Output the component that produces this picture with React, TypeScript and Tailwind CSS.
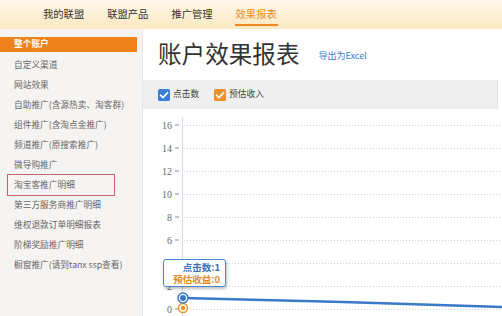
import React from "react";

const sideItems = [
  "自定义渠道",
  "网站效果",
  "自助推广(含源热卖、淘客群)",
  "组件推广(含淘点金推广)",
  "频道推广(原搜索推广)",
  "微导购推广",
  "淘宝客推广明细",
  "第三方服务商推广明细",
  "维权退款订单明细报表",
  "阶梯奖励推广明细",
  "橱窗推广(请到tanx ssp查看)",
];

const yLabels = [16, 14, 12, 10, 8, 6, 4, 2, 0];

function Check({ color }: { color: string }) {
  return (
    <svg width="12" height="12" viewBox="0 0 12 12">
      <rect x="0" y="0" width="12" height="12" rx="1.5" fill={color} />
      <path d="M2.5 6.2 L5 8.6 L9.6 3.6" stroke="#fff" strokeWidth="1.6" fill="none" strokeLinecap="round" strokeLinejoin="round" />
    </svg>
  );
}

export default function App() {
  return (
    <div
      className="w-[502px] h-[316px] overflow-hidden bg-white flex flex-col"
      style={{ fontFamily: '"Noto Sans CJK SC", "Noto Sans", sans-serif' }}
    >
      {/* top nav */}
      <div className="h-[29px] shrink-0 bg-gradient-to-b from-[#fef8e8] to-[#fbe8c2] flex items-stretch pl-[43px] gap-[23px]">
        {["我的联盟", "联盟产品", "推广管理"].map((t) => (
          <div key={t} className="flex items-center text-[10.3px] text-[#333] leading-none">
            {t}
          </div>
        ))}
        <div className="relative flex items-center text-[10.3px] text-[#f08a24] leading-none">
          效果报表
          <div className="absolute left-[-1px] right-[-1px] bottom-[3px] h-[2px] bg-[#f08a24]" />
        </div>
      </div>

      <div className="flex flex-1 min-h-0">
        {/* sidebar */}
        <div className="w-[142px] shrink-0 bg-[#f6f4f2] pt-[8px]">
          <div className="w-[137px] h-[15px] bg-[#f0821c] flex items-center pl-[14px] text-[8.7px] font-bold text-white leading-none">
            整个账户
          </div>
          <div className="mt-[3px] flex flex-col">
            {sideItems.map((t) => (
              <div key={t} className="h-[20px] flex items-center relative">
                {t === "淘宝客推广明细" && (
                  <div className="absolute left-[7px] w-[108px] top-[-1px] h-[22px] border border-[#c4646c]" />
                )}
                <span className="pl-[14px] text-[8.7px] text-[#666] leading-none whitespace-nowrap">{t}</span>
              </div>
            ))}
          </div>
        </div>

        {/* content */}
        <div className="flex-1 flex flex-col border-l border-[#e6e6e6] min-w-0">
          <div className="h-[51px] shrink-0 flex items-center pl-[15px] pb-[2px]">
            <span className="text-[23.6px] text-[#333] leading-none tracking-[0px]">账户效果报表</span>
            <span className="ml-[19px] mt-[4px] text-[9px] text-[#3a7bd5] leading-none">导出为Excel</span>
          </div>
          <div className="h-[29px] shrink-0 mr-[4px] bg-[#efefef] border-r border-[#e2e2e2] flex items-center pl-[15px]">
            <Check color="#3a7fd6" />
            <span className="ml-[3px] text-[8.7px] text-[#444] leading-none">点击数</span>
            <div className="ml-[15px]">
              <Check color="#e9922c" />
            </div>
            <span className="ml-[3px] text-[8.7px] text-[#444] leading-none">预估收入</span>
          </div>
          <div className="relative flex-1">
            <svg width="360" height="207" viewBox="0 0 360 207" className="block">
              <line x1="39.5" y1="8" x2="39.5" y2="207" stroke="#d3dceb" strokeWidth="1" />
              {yLabels.map((v, i) => {
                const y = 16 + i * 23;
                return (
                  <g key={v}>
                    <text
                      x="29"
                      y={y + 3.5}
                      textAnchor="end"
                      fontSize="10"
                      fill="#666"
                      fontFamily='"Liberation Serif", serif'
                    >
                      {v}
                    </text>
                    <line x1="32" y1={y} x2="36" y2={y} stroke="#888" strokeWidth="1" />
                    <line x1="41" y1={y + 0.5} x2="360" y2={y + 0.5} stroke="#cfcfcf" strokeWidth="1" strokeDasharray="1 2" />
                  </g>
                );
              })}
              <path d="M40 189 L200 193 L360 198" stroke="#3a78c8" strokeWidth="2.5" fill="none" />
              <circle cx="40" cy="199" r="4.5" fill="#fff" stroke="#e9922c" strokeWidth="1.5" />
              <circle cx="40" cy="199" r="2.2" fill="#e9922c" />
              <circle cx="40" cy="189" r="5" fill="#fff" stroke="#3a78c8" strokeWidth="1.5" />
              <circle cx="40" cy="189" r="3" fill="#3a78c8" />
            </svg>
            <div className="absolute left-[20px] top-[150px] w-[63px] h-[28px] bg-white border-[1.5px] border-[#4a86cc] rounded-[3px] shadow-[1px_2px_3px_rgba(0,0,0,0.25)] flex flex-col items-end justify-center pr-[5px] font-bold text-[9.5px] leading-[12px]">
              <span className="text-[#3d6fb6]">点击数:1</span>
              <span className="text-[#e38b1d]">预估收益:0</span>
            </div>
          </div>
        </div>
      </div>
    </div>
  );
}
